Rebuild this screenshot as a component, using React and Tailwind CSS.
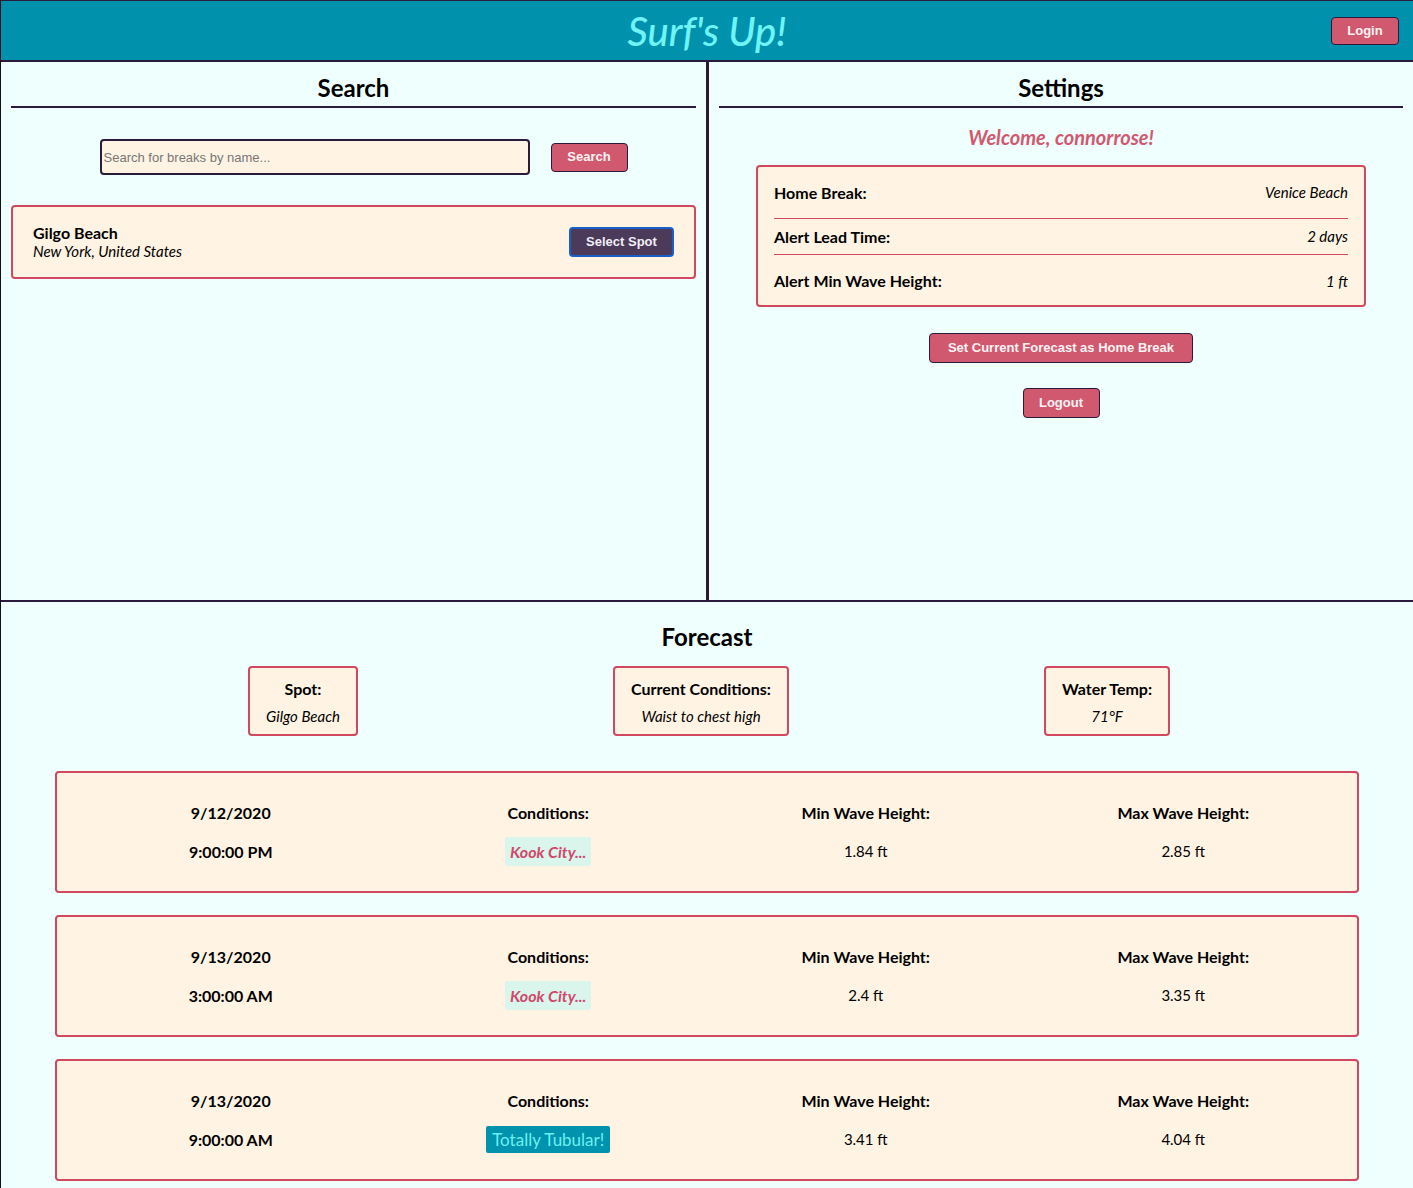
import React from "react";

const lato = { fontFamily: "Lato, 'Noto Sans', sans-serif" };

function Btn({ children, className = "" }) {
  return (
    <button
      className={
        "rounded-[4px] border border-[#2a1b3d] bg-[#d1596f] text-[13px] font-bold text-[#fff3f3] font-['Liberation_Sans',Arial,sans-serif] " +
        className
      }
    >
      {children}
    </button>
  );
}

function ForecastCard({ date, time, cond, good, min, max }) {
  return (
    <div className="mb-[22px] ml-[54px] mr-[54px] h-[122px] rounded-[4px] border-2 border-[#d1485f] bg-[#fff3e3] px-[15px]">
      <div className="grid grid-cols-4 text-center text-black">
        {[
          [date, time, "date"],
          ["Conditions:", cond, "cond"],
          ["Min Wave Height:", min, "v"],
          ["Max Wave Height:", max, "v"],
        ].map(([a, b, t], i) => (
          <div key={i} className="flex flex-col items-center">
            <div className="mt-[30px] h-[20px] text-[16px] font-bold leading-[20px]">{a}</div>
            <div className="mt-[14px] flex h-[29px] items-center">
              {t === "date" ? (
                <span className="text-[16px] font-bold">{b}</span>
              ) : t === "cond" ? (
                good ? (
                  <span className="rounded-[2px] bg-[#0093ad] px-[6px] py-[3px] text-[17px] leading-[21px] text-[#6ef0f0]">
                    {b}
                  </span>
                ) : (
                  <span className="rounded-[2px] bg-[#d9f5ec] px-[5px] py-[4px] text-[16px] font-bold italic leading-[21px] text-[#d1486b]">
                    {b}
                  </span>
                )
              ) : (
                <span className="text-[15px]">{b}</span>
              )}
            </div>
          </div>
        ))}
      </div>
    </div>
  );
}

export default function App() {
  return (
    <div style={lato} className="min-h-[1188px] border-l border-[#111] bg-[#effffe] text-black">
      {/* Header */}
      <header className="relative flex h-[62px] items-center justify-center border-t border-b-2 border-[#2a1b3d] bg-[#0091ad]">
        <h1 className="text-[40px] font-medium italic leading-none text-[#6ef4f4]">Surf's Up!</h1>
        <Btn className="absolute right-[14px] top-[16px] h-[28px] w-[68px] bg-[#c2506a]">Login</Btn>
      </header>

      {/* Panels */}
      <div className="flex h-[540px] border-b-2 border-[#2a1b3d]">
        {/* Search */}
        <section className="w-[705px] shrink-0 px-[10px]">
          <h2 className="mt-[11px] border-b-2 border-[#2a1b3d] pb-[4px] text-center text-[24px] font-bold leading-[29px]">
            Search
          </h2>
          <div className="mt-[31px] flex items-center justify-center gap-[21px] pl-[20px]">
            <input
              placeholder="Search for breaks by name..."
              className="h-[36px] w-[430px] rounded-[4px] border-2 border-[#2a1b3d] bg-[#fff3e3] px-[2px] text-[13px] font-['Liberation_Sans',Arial,sans-serif] placeholder:text-[#777]"
            />
            <Btn className="h-[29px] w-[77px]">Search</Btn>
          </div>
          <div className="mt-[30px] flex h-[74px] items-center justify-between rounded-[4px] border-2 border-[#d1485f] bg-[#fff3e3] pl-[20px] pr-[20px]">
            <div>
              <div className="text-[16px] font-bold leading-[19px]">Gilgo Beach</div>
              <div className="text-[15px] italic leading-[19px]">New York, United States</div>
            </div>
            <button className="h-[30px] w-[105px] rounded-[4px] border-2 border-[#1a5fc8] bg-[#4b3a5a] text-[13px] font-bold text-[#f2eef6] font-['Liberation_Sans',Arial,sans-serif]">
              Select Spot
            </button>
          </div>
        </section>

        <div className="w-[3px] shrink-0 bg-[#2a1b3d]" />

        {/* Settings */}
        <section className="flex-1 px-[10px]">
          <h2 className="mt-[11px] border-b-2 border-[#2a1b3d] pb-[4px] text-center text-[24px] font-bold leading-[29px]">
            Settings
          </h2>
          <div className="mt-[17px] text-center text-[20px] font-bold italic leading-[24px] text-[#d1596f]">
            Welcome, connorrose!
          </div>
          <div className="mx-auto mt-[16px] w-[610px] rounded-[4px] border-2 border-[#d1485f] bg-[#fff3e3] px-[16px]">
            {[
              ["Home Break:", "Venice Beach"],
              ["Alert Lead Time:", "2 days"],
              ["Alert Min Wave Height:", "1 ft"],
            ].map(([k, v], i) => (
              <div
                key={i}
                className={
                  "flex items-center justify-between " +
                  (i === 0
                    ? "h-[52px] border-b border-[#d1485f]"
                    : i === 1
                    ? "h-[36px] border-b border-[#d1485f]"
                    : "h-[50px] pt-[2px]")
                }
              >
                <span className="text-[16px] font-bold">{k}</span>
                <span className="text-[15px] italic">{v}</span>
              </div>
            ))}
          </div>
          <div className="mt-[26px] flex flex-col items-center gap-[25px]">
            <Btn className="h-[30px] w-[264px]">Set Current Forecast as Home Break</Btn>
            <Btn className="h-[30px] w-[77px]">Logout</Btn>
          </div>
        </section>
      </div>

      {/* Forecast */}
      <section>
        <h2 className="mt-[20px] text-center text-[24px] font-bold leading-[29px]">Forecast</h2>
        <div className="mt-[15px] flex justify-center gap-[255px] pl-[4px]">
          {[
            ["Spot:", "Gilgo Beach", "w-[110px]"],
            ["Current Conditions:", "Waist to chest high", "w-[176px]"],
            ["Water Temp:", "71°F", "w-[126px]"],
          ].map(([a, b, w], i) => (
            <div
              key={i}
              className={"flex h-[70px] flex-col items-center rounded-[4px] border-2 border-[#d1485f] bg-[#fff3e3] " + w}
            >
              <div className="mt-[11px] text-[16px] font-bold leading-[20px]">{a}</div>
              <div className="mt-[7px] text-[15px] italic leading-[20px]">{b}</div>
            </div>
          ))}
        </div>
        <div className="mt-[35px]">
          <ForecastCard date="9/12/2020" time="9:00:00 PM" cond="Kook City..." min="1.84 ft" max="2.85 ft" />
          <ForecastCard date="9/13/2020" time="3:00:00 AM" cond="Kook City..." min="2.4 ft" max="3.35 ft" />
          <ForecastCard date="9/13/2020" time="9:00:00 AM" cond="Totally Tubular!" good min="3.41 ft" max="4.04 ft" />
        </div>
      </section>
    </div>
  );
}
